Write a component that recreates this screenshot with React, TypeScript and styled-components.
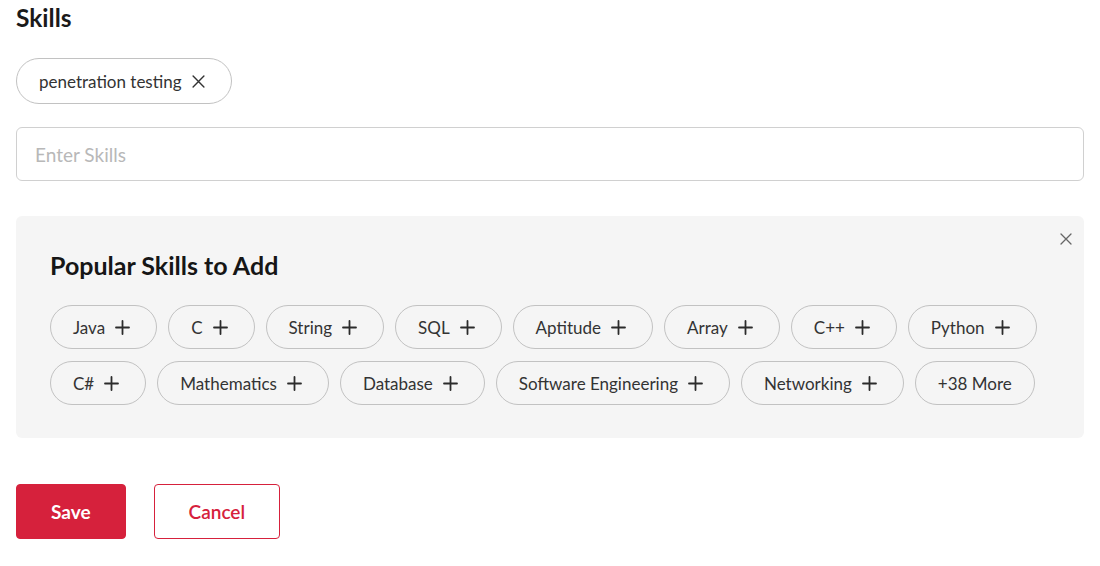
import { FC, ReactElement, useState } from "react";
import styled, { createGlobalStyle } from "styled-components";

const GlobalStyle = createGlobalStyle`
    body {
        margin: 0;
        background: #ffffff;
        font-family: Lato, "Open Sans", sans-serif;
        color: #1c1c1c;
    }
`;

const Page = styled.div`
    display: flex;
    flex-direction: column;
    padding: 3px 16px 0 16px;
`;

const Heading = styled.h2`
    margin: 0;
    font-size: 24.5px;
    line-height: 30px;
    font-weight: 700;
    color: #1a1a1a;
`;

const SelectedRow = styled.div`
    display: flex;
    flex-wrap: wrap;
    gap: 11px;
    margin-top: 25px;
`;

const Chip = styled.button<{ $height: number }>`
    display: inline-flex;
    align-items: center;
    gap: 10px;
    height: ${(p) => p.$height}px;
    padding: 0 22px;
    border: 1px solid #c2c2c2;
    border-radius: 999px;
    background: transparent;
    font-family: Lato, sans-serif;
    font-size: 17px;
    color: #333333;
    cursor: pointer;
    box-sizing: border-box;

    svg {
        margin-right: 4px;
    }
`;

const SkillInput = styled.input`
    margin-top: 23px;
    height: 54px;
    box-sizing: border-box;
    width: 100%;
    border: 1px solid #d0d0d0;
    border-radius: 6px;
    padding: 0 18px;
    font-family: Lato, sans-serif;
    font-size: 19px;
    color: #333;
    outline: none;
    caret-color: #333;

    &::placeholder {
        color: #b8b8b8;
    }
`;

const Panel = styled.section`
    position: relative;
    margin-top: 35px;
    background: #f5f5f5;
    border-radius: 6px;
    padding: 34px 34px 33px 34px;
`;

const CloseButton = styled.button`
    position: absolute;
    top: 13px;
    right: 8px;
    width: 20px;
    height: 20px;
    border: none;
    background: transparent;
    padding: 0;
    display: flex;
    align-items: center;
    justify-content: center;
    cursor: pointer;
`;

const PanelTitle = styled.h3`
    margin: 0;
    font-size: 25px;
    line-height: 30px;
    font-weight: 700;
    color: #161616;
`;

const SuggestionList = styled.div`
    display: flex;
    flex-wrap: wrap;
    column-gap: 11px;
    row-gap: 12px;
    margin-top: 25px;
    max-width: 990px;
`;

const Actions = styled.div`
    display: flex;
    gap: 28px;
    margin-top: 46px;
`;

const ActionButton = styled.button<{ $primary?: boolean }>`
    height: 55px;
    padding: 0 34px;
    border-radius: 4px;
    border: 1px solid #d6213c;
    background: ${(p) => (p.$primary ? "#d6213c" : "#ffffff")};
    color: ${(p) => (p.$primary ? "#ffffff" : "#d6213c")};
    font-family: Lato, sans-serif;
    font-size: 19px;
    font-weight: ${(p) => (p.$primary ? 700 : 600)};
    cursor: pointer;
`;

const CrossIcon: FC<{ size: number; color: string }> = ({ size, color }) => (
    <svg width={size} height={size} viewBox="0 0 12 12" fill="none">
        <path d="M1 1L11 11M11 1L1 11" stroke={color} strokeWidth="1.3" strokeLinecap="round" />
    </svg>
);

const PlusIcon: FC = () => (
    <svg width="15" height="15" viewBox="0 0 15 15" fill="none">
        <path d="M7.5 1V14M1 7.5H14" stroke="#2b2b2b" strokeWidth="1.8" strokeLinecap="round" />
    </svg>
);

const popularSkills: string[] = [
    "Java",
    "C",
    "String",
    "SQL",
    "Aptitude",
    "Array",
    "C++",
    "Python",
    "C#",
    "Mathematics",
    "Database",
    "Software Engineering",
    "Networking",
];

export default function App(): ReactElement {
    const [skills, setSkills] = useState<string[]>(["penetration testing"]);

    return (
        <Page>
            <GlobalStyle />
            <Heading>Skills</Heading>

            <SelectedRow>
                {skills.map((skill) => (
                    <Chip
                        key={skill}
                        $height={46}
                        onClick={() => setSkills(skills.filter((s) => s !== skill))}
                    >
                        {skill}
                        <CrossIcon size={13} color="#333" />
                    </Chip>
                ))}
            </SelectedRow>

            <SkillInput placeholder="Enter Skills" autoFocus />

            <Panel>
                <CloseButton aria-label="close">
                    <CrossIcon size={12} color="#666" />
                </CloseButton>
                <PanelTitle>Popular Skills to Add</PanelTitle>
                <SuggestionList>
                    {popularSkills.map((skill) => (
                        <Chip key={skill} $height={44}>
                            {skill}
                            <PlusIcon />
                        </Chip>
                    ))}
                    <Chip $height={44}>+38 More</Chip>
                </SuggestionList>
            </Panel>

            <Actions>
                <ActionButton $primary>Save</ActionButton>
                <ActionButton>Cancel</ActionButton>
            </Actions>
        </Page>
    );
}
